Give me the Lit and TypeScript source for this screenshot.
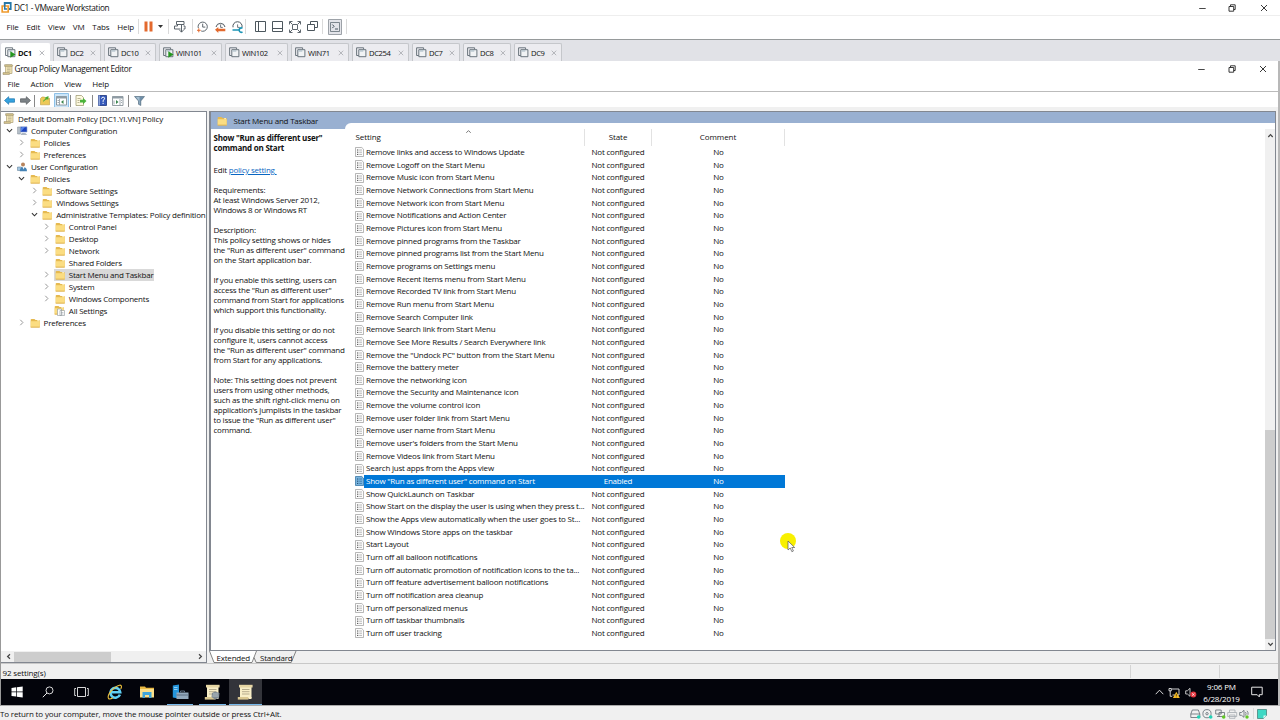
import { css, CSSResultGroup, html, LitElement, nothing, svg, SVGTemplateResult, TemplateResult } from "lit";
import { property, customElement } from "lit/decorators.js";
import { classMap } from "lit/directives/class-map.js";
import { styleMap } from "lit/directives/style-map.js";

interface Glyph {
    w: number;
    h: number;
    body: SVGTemplateResult;
}

const scroll = svg`<path d="M3.5 1H10v8.5H3.5z" fill="#f3e6b5" stroke="#a2956e" stroke-width=".6"/><path d="M2.6.7h7.6q1 .7 0 1.700H2.6zM1 8.6h6.4q1 1 0 1.9H1z" fill="#d8c58c" stroke="#8f8465" stroke-width=".5"/><path d="M5 4h3.5M5 5.6h3.5M5 7.2h3.5" stroke="#a99f83" stroke-width=".6"/>`;
const bigScroll = svg`<path d="M3 2h11.5v12H3z" fill="#f8eec7"/><path d="M2 .8h13.6v2.7H2z" fill="#e6d6a4"/><path d="M.8 13h10.7v2.6H.8z" fill="#d9c68f"/><path d="M11.5 13h3v2h-3z" fill="#fff2c7"/><path d="M5 5.5h7.5M5 7.7h7.5M5 10h7.5" stroke="#a49a7d" stroke-width=".8"/>`;
const folder = svg`<path d="M.7 1.8Q.7 1 1.5 1h3l1 1H9q.7 0 .7.8v6.5H.7z" fill="#e5b950"/><path d="M.7 3.2h9v6.1H.7z" fill="#fbdd82"/><path d="M.7 8.7h9v.8h-9z" fill="#d9ab49"/><path d="M7.3 2.1h1.6v1.2H7.3z" fill="#fff3bf"/>`;
const vm = svg`<path d="M2.8 8.5H.6V.8h7v1.6" fill="none" stroke="#5c6870" stroke-width=".9"/><path d="M2.8 2.7h7.1v7H2.8z" fill="#f1f3f5" stroke="#5c6870" stroke-width=".9"/><path d="M3.3 3.1h4v1.6h-4z" fill="#b9c6cf"/>`;

const glyphs: { [name: string]: Glyph } = {
    vmware: { w: 11, h: 11, body: svg`<path d="M3.7 4V1h6v6H7.4" fill="none" stroke="#2778a8" stroke-width="1.8"/><path d="M1.2 4h6v6h-6z" fill="none" stroke="#ef9a2c" stroke-width="1.7"/><path d="M3.7 3v4H6" fill="none" stroke="#2778a8" stroke-width="1.5"/>` },
    scroll: { w: 12, h: 11, body: scroll },
    folder: { w: 10, h: 10, body: folder },
    vm: { w: 11, h: 11, body: vm },
    vmOn: { w: 11, h: 11, body: svg`${vm}<path d="M5.3 4.2v6.6l5.3-3.300z" fill="#25961f"/>` },
    pause: { w: 9, h: 11, body: svg`<path d="M.5.5h3v10h-3zM5.5.5h3v10h-3z" fill="#e3692d"/>` },
    caret: { w: 5, h: 3, body: svg`<path d="M0 0h5L2.5 3z" fill="#333"/>` },
    send: { w: 12, h: 12, body: svg`<path d="M2.5.5h7.500v3H2.5zM3.5 3.5v1.500H.5v3h6M9.500 5h1.500v3h-1.500" fill="none" stroke="#4c565d" stroke-width=".9"/><path d="M7.500 4v7M5.300 8.800 7.500 11.200 9.700 8.800" fill="none" stroke="#4c565d" stroke-width=".9"/>` },
    snap: { w: 11, h: 12, body: svg`<circle cx="5.7" cy="5.7" r="4.6" fill="none" stroke="#4c565d" stroke-width=".9"/><path d="M5.7 2.7v3.4h2.6" fill="none" stroke="#4c565d" stroke-width=".9"/><path d="M0 7h4.2v5H0z" fill="#fff"/><path d="M1.8 7.3v4M0 9.3h3.7" stroke="#e3692d"/>` },
    revert: { w: 11, h: 12, body: svg`<path d="M1 6a4.6 4.6 0 0 1 9 0" fill="none" stroke="#4c565d"/><path d="M5.6 3.4v3h2.2" fill="none" stroke="#4c565d" stroke-width=".8"/><path d="M0 8.8 3.3 6v1.8h7v2.4h-7V12z" fill="#e3692d"/>` },
    manage: { w: 11, h: 12, body: svg`<path d="M1 6.3a4.6 4.6 0 1 1 9 0" fill="none" stroke="#4c565d"/><path d="M5.6 3.4v3h2.2" fill="none" stroke="#4c565d" stroke-width=".8"/><path d="M.5 9h6.8M10.5 7.2a2.2 2.2 0 1 0 0 3.7" fill="none" stroke="#1b94b5" stroke-width="1.7"/>` },
    side: { w: 11, h: 11, body: svg`<path d="M.5.5h10v10H.5zM3.5.5v10" fill="none" stroke="#4c565d"/>` },
    lower: { w: 11, h: 11, body: svg`<path d="M.5.5h10v10H.5zM.5 7.5h10" fill="none" stroke="#4c565d"/>` },
    full: { w: 12, h: 12, body: svg`<path d="M.5 3.5v-3h3M8.5.5h3v3M11.5 8.5v3h-3M3.5 11.5h-3v-3M3.5 3.5h5v5h-5zM1 1l2 2M11 1 9 3M11 11 9 9M1 11l2-2" fill="none" stroke="#4c565d" stroke-width=".9"/>` },
    unity: { w: 11, h: 11, body: svg`<path d="M3.5 3.5V.5h7v6H7.5M.5 3.5h7v6H.5z" fill="none" stroke="#4c565d"/>` },
    console: { w: 14, h: 16, body: svg`<path d="M.5.5h13v15H.5z" fill="#e3e4e9" stroke="#9da2a8"/><path d="M2.5 3.5h9v9h-9z" fill="none" stroke="#626d75" stroke-width=".8"/><path d="m4.3 5.5 1.8 1.8-1.8 1.8M7 10h3" fill="none" stroke="#34444f" stroke-width=".9"/>` },
    min: { w: 8, h: 8, body: svg`<path d="M.2 4.5h6.500" stroke="#333" stroke-width=".9"/>` },
    restore: { w: 8, h: 8, body: svg`<path d="M1.500 2.3V.8h4.700v4.7H4.700M0 2.500h4.700v4.7H0z" fill="none" stroke="#222" stroke-width=".9"/>` },
    close: { w: 8, h: 8, body: svg`<path d="m1 1 6 6M7 1 1 7" stroke="#222" stroke-width=".9"/>` },
    tabClose: { w: 6, h: 6, body: svg`<path d="m.7.7 4.5 4.5M5.2.7.7 5.2" stroke="#adafb3" stroke-width=".9"/>` },
    back: { w: 11, h: 9, body: svg`<path d="M.5 4.5 4.7.7v2.1h5.8v3.4H4.7v2.1z" fill="#35a2df" stroke="#1872ad" stroke-width=".7"/>` },
    forward: { w: 11, h: 9, body: svg`<path d="M10.5 4.5 6.3.7v2.1H.5v3.4h5.8v2.1z" fill="#7c8286" stroke="#54595c" stroke-width=".7"/>` },
    up: { w: 10, h: 11, body: svg`<path d="M.5 3.5 2 2h2.5l1 1.2h4v6.6h-9z" fill="#edc957" stroke="#c19b3d" stroke-width=".6"/><path d="M3 7Q3 4.5 5.5 4L5 2.5 8.5 1 8.3 4.8 7 4.3Q5 5 3 7z" fill="#4cad35"/>` },
    paneOn: { w: 15, h: 15, body: svg`<path d="M.5.5h14v14H.5z" fill="#cce5f8" stroke="#8dc1e8"/><path d="M2.5 3.5h10v8.5h-10z" fill="#fff" stroke="#7a858d" stroke-width=".8"/><path d="M2.5 3.5h10v2h-10z" fill="#8f9ca5"/><path d="M5.5 6v6M3.5 7.5H5M3.5 9.5H5" stroke="#8d989f" stroke-width=".8"/><path d="m7 9 2.5-2v4z" fill="#38834b"/>` },
    pane: { w: 12, h: 10, body: svg`<path d="M.5.5h10.5v9H.5z" fill="#fff" stroke="#7a858d" stroke-width=".8"/><path d="M.5.5h10.5v2H.5z" fill="#8f9ca5"/><path d="M8 3v6M9 4.5h1M9 6.5h1M2 4.5v4" stroke="#8d989f" stroke-width=".8"/><path d="M6.5 6 4 4v4z" fill="#38834b"/>` },
    exp: { w: 12, h: 11, body: svg`<path d="M1 .5h5.5l2 2v8H1z" fill="#fdf9df" stroke="#979268" stroke-width=".7"/><path d="M2.5 3.5h3M2.5 5.5h2M2.5 7.5h2" stroke="#9d9878" stroke-width=".7"/><path d="M5 4.7h3V3l3.5 3.1L8 9.2V7.5H5z" fill="#4bb33b"/>` },
    help: { w: 9, h: 11, body: svg`<path d="M.5.5h8v10h-8z" fill="#3559bb" stroke="#1c347e" stroke-width=".8"/><path d="M.5.5H2v10H.5z" fill="#8da4da"/><path d="M3.5 3.7q.2-1.6 1.7-1.5 1.6.1 1.4 1.6Q6.3 4.8 5.1 5.4v1.5M5.1 7.8v1.2" fill="none" stroke="#fff"/>` },
    filter: { w: 11, h: 10, body: svg`<path d="M.5.5h10L6.8 5v4.5L4.5 8.3V5z" fill="#6f8fa9" stroke="#4c6577" stroke-width=".6"/><path d="M2 1h3.5v7.5L5 8V5z" fill="#a5bfd2"/>` },
    open: { w: 7, h: 7, body: svg`<path d="m.9 2.2 2.6 2.6 2.6-2.6" fill="none" stroke="#333" stroke-width="1.1"/>` },
    shut: { w: 7, h: 7, body: svg`<path d="M2.3.8 4.9 3.5 2.3 6.2" fill="none" stroke="#8c8c8c" stroke-width=".9"/>` },
    computer: { w: 11, h: 10, body: svg`<path d="M.6 1h2.7v7H.6z" fill="#b9c2cc" stroke="#77828d" stroke-width=".5"/><path d="M3.5.8h6.5v5.2H3.5z" fill="#1d43bf" stroke="#8ba0c9" stroke-width=".6"/><path d="M5 .9h3L4 5.6V2z" fill="#5684e8"/><path d="M4.8 7h3.5l2 2H3.5z" fill="#aeb8c4"/>` },
    user: { w: 11, h: 10, body: svg`<path d="M.5 5h4v3.5h-4z" fill="#a5c6e0" stroke="#54758f" stroke-width=".5"/><circle cx="6" cy="2.6" r="2" fill="#b7835b"/><path d="M2.8 9.3q0-4 3.2-4.2 3.8 0 4 4.2z" fill="#4683b5"/><path d="m5.5 5 1.2 2.5L7.5 5z" fill="#fff"/>` },
    all: { w: 11, h: 11, body: svg`${folder}<path d="M3.5 4h4v6.5h-4zM6 5.5h4.5v5H6z" fill="#fff" stroke="#8e979c" stroke-width=".6"/><path d="M7 7.5h2.5M7 9h2.5" stroke="#8e979c" stroke-width=".5"/>` },
    policy: { w: 9, h: 10, body: svg`<path d="M.5.5h6.3l1.7 1.7v7.3h-8z" fill="#fcfcfc" stroke="#9a9a9a" stroke-width=".7"/><path d="M2 3h1.3M2 5.2h1.3M2 7.4h1.3" stroke="#333" stroke-width=".9"/><path d="M4.2 3H7M4.2 5.2H7M4.2 7.4H7" stroke="#999" stroke-width=".7"/>` },
    policySel: { w: 9, h: 10, body: svg`<path d="M.5.5h6.3l1.7 1.7v7.3h-8z" fill="#79b4df" stroke="#2a6c9d" stroke-width=".7"/><path d="M2 3h1.3M2 5.2h1.3M2 7.4h1.3" stroke="#123c5d" stroke-width=".9"/><path d="M4.2 3H7M4.2 5.2H7M4.2 7.4H7" stroke="#2a6c9d" stroke-width=".7"/>` },
    sort: { w: 7, h: 5, body: svg`<path d="m1.3 3.8 2.2-2.2 2.2 2.2" fill="none" stroke="#666" stroke-width=".9"/>` },
    arrowUp: { w: 7, h: 5, body: svg`<path d="m1.3 4 2.2-2.4L5.7 4" fill="none" stroke="#444" stroke-width="1.2"/>` },
    arrowDown: { w: 7, h: 5, body: svg`<path d="m1.3 1 2.2 2.4L5.7 1" fill="none" stroke="#444" stroke-width="1.2"/>` },
    arrowLeft: { w: 5, h: 7, body: svg`<path d="M4 1.3 1.6 3.5 4 5.7" fill="none" stroke="#444" stroke-width="1.2"/>` },
    arrowRight: { w: 5, h: 7, body: svg`<path d="m1 1.3 2.4 2.2L1 5.7" fill="none" stroke="#444" stroke-width="1.2"/>` },
    windows: { w: 12, h: 12, body: svg`<path d="m.5 2 4.7-.7v4.3H.5zM5.9 1.2 11.7.4v5.2H5.9zM.5 6.3h4.7v4.3L.5 9.9zM5.9 6.3h5.8v5.3l-5.8-.8z" fill="#fff"/>` },
    search: { w: 12, h: 12, body: svg`<circle cx="7.5" cy="4.4" r="3.5" fill="none" stroke="#eee" stroke-width=".9"/><path d="M5 7 .8 11.2" stroke="#eee"/>` },
    views: { w: 15, h: 12, body: svg`<path d="M3.5 1.5h8v9h-8zM2 2.5H.7v7H2M13 2.5h1.3v7H13" fill="none" stroke="#eee" stroke-width=".9"/>` },
    ie: { w: 16, h: 16, body: svg`<path d="M12.9 10.6A4.9 4.9 0 1 1 13.200 8.200H4.5" fill="none" stroke="#5fd0f5" stroke-width="2.6"/><path d="M1.5 14.5C-.5 11 7 2.3 12.5 1.2c2.5-.4 2.3 2 1.2 3.8M1.5 14.5c1 .9 3 .2 4.5-.7" fill="none" stroke="#f0c43e" stroke-width="1.1"/>` },
    explorer: { w: 16, h: 14, body: svg`<path d="M1 1.5h5l1 1.2h8V12H1z" fill="#e8b843"/><path d="M1 4h14v8.5H1z" fill="#fbe08a"/><path d="M3.5 7h9v6h-2.5v-3H6v3H3.5z" fill="#3fa5d9"/>` },
    server: { w: 17, h: 16, body: svg`<path d="M.8 1.5 7 .5v14l-6.2-1z" fill="#2494da"/><path d="M2 3.5h3.5M2 5.5h3.5" stroke="#a7dcfb" stroke-width=".8"/><path d="M4.5 8.5h12v6.5h-12z" fill="#93a9bd"/><path d="M8.5 8.3V7h4v1.3M4.5 11h12" fill="none" stroke="#5e7184"/>` },
    gpm: { w: 17, h: 16, body: svg`${bigScroll}<path d="m8 9 3-1.5L15.5 9l-.5 5-4 1.5L7.5 13z" fill="#7f8b93"/><path d="M9 10h5M8.5 12h6" stroke="#c2ccd2" stroke-width=".8"/>` },
    gpe: { w: 17, h: 16, body: bigScroll },
    chevron: { w: 9, h: 6, body: svg`<path d="m.7 5.2 3.8-4 3.8 4" fill="none" stroke="#eee" stroke-width=".9"/>` },
    net: { w: 12, h: 11, body: svg`<path d="M3.5 2h7.5v6H4.5M6 10h3M1 1.5h2.3v2.3H1zM2.2 4v5.3h2" fill="none" stroke="#e5e5e5" stroke-width=".9"/><path d="M8.3 4.8 11.8 11H4.9z" fill="#f6bb25"/><path d="M8.3 7v2M8.3 9.6v.7" stroke="#493500" stroke-width=".8"/>` },
    mute: { w: 12, h: 11, body: svg`<path d="M.7 3.8h1.7L5 1.3v8L2.4 7H.7z" fill="none" stroke="#eee" stroke-width=".8"/><circle cx="8.3" cy="7.5" r="3" fill="#e3333d"/><path d="m7.1 6.3 2.4 2.4M9.5 6.3 7.1 8.7" stroke="#fff" stroke-width=".8"/>` },
    note: { w: 12, h: 12, body: svg`<path d="M.7 1.2h10.5v7.5H8.3v2.2L6.2 8.7H.7z" fill="none" stroke="#e8e8e8"/>` },
    disk: { w: 11, h: 10, body: svg`<path d="M2.3 1h6l1.5 4v3.5h-9V5zM.8 5h9" fill="none" stroke="#5f6a71" stroke-width=".8"/><circle cx="8.7" cy="8" r="1.8" fill="#20d3b7"/>` },
    cd: { w: 11, h: 10, body: svg`<circle cx="5" cy="4.7" r="4.1" fill="none" stroke="#5f6a71" stroke-width=".8"/><circle cx="5" cy="4.7" r="1.2" fill="none" stroke="#5f6a71" stroke-width=".8"/><circle cx="8.7" cy="8" r="1.8" fill="#20d3b7"/>` },
    lan: { w: 11, h: 10, body: svg`<path d="M.7 1h5.5v4H.7zM4 3.5h5.5v4H4zM2 7.5h3" fill="#f0f0f0" stroke="#5f6a71" stroke-width=".8"/><circle cx="8.7" cy="8" r="1.8" fill="#60c627"/>` },
    printer: { w: 11, h: 10, body: svg`<path d="M2.5 3.5V1h5.5v2.5M.7 3.5h9v4h-9zM2.5 6h5.5v3.3H2.5z" fill="none" stroke="#a5abb0" stroke-width=".8"/>` },
    sound: { w: 11, h: 10, body: svg`<path d="M.7 3.5h1.8L5 1.3v7L2.5 6.3H.7zM6.5 3q1.2 1.7 0 3.5M8 1.8q1.5 1.7 1 4" fill="none" stroke="#5f6a71" stroke-width=".8"/><circle cx="8" cy="8" r="1.7" fill="#60c627"/>` },
    sticky: { w: 10, h: 10, body: svg`<path d="M.5.5h9v6l-3 3h-6z" fill="#3ed8c4" stroke="#3b7770" stroke-width=".7"/><path d="M6.5 9.5v-3h3z" fill="#dffaf5"/>` },
    pointer: { w: 9, h: 13, body: svg`<path d="M1 1v9l2.2-2 1.7 3.7 1.5-.7-1.6-3.5h2.9z" fill="#fff" stroke="#555" stroke-width=".7"/>` },
    tabs: { w: 90, h: 13, body: svg`<path d="M0 0h48l-4.5 11.5H5z" fill="#fff"/><path d="M.5 0 5 11.5h38L47.5 0M45 6.5l2.2 5h35L87 0" fill="none" stroke="#666" stroke-width=".8"/>` },
};

const vmTabs: [string, number, boolean][] = [
    ["DC1", 49, true], ["DC2", 48, false], ["DC10", 52, false], ["WIN101", 63, true], ["WIN102", 63, false],
    ["WIN71", 58, false], ["DC254", 57, false], ["DC7", 48, false], ["DC8", 48, false], ["DC9", 48, false],
];

// label, depth, twisty, icon
const tree: [string, number, string, string][] = [
    ["Computer Configuration", 0, "open", "computer"],
    ["Policies", 1, "shut", "folder"],
    ["Preferences", 1, "shut", "folder"],
    ["User Configuration", 0, "open", "user"],
    ["Policies", 1, "open", "folder"],
    ["Software Settings", 2, "shut", "folder"],
    ["Windows Settings", 2, "shut", "folder"],
    ["Administrative Templates: Policy definition", 2, "open", "folder"],
    ["Control Panel", 3, "shut", "folder"],
    ["Desktop", 3, "shut", "folder"],
    ["Network", 3, "shut", "folder"],
    ["Shared Folders", 3, "", "folder"],
    ["Start Menu and Taskbar", 3, "shut", "folder"],
    ["System", 3, "shut", "folder"],
    ["Windows Components", 3, "shut", "folder"],
    ["All Settings", 3, "", "all"],
    ["Preferences", 1, "shut", "folder"],
];

const selected = 'Show "Run as different user" command on Start';

const settings = [
    "Remove links and access to Windows Update",
    "Remove Logoff on the Start Menu",
    "Remove Music icon from Start Menu",
    "Remove Network Connections from Start Menu",
    "Remove Network icon from Start Menu",
    "Remove Notifications and Action Center",
    "Remove Pictures icon from Start Menu",
    "Remove pinned programs from the Taskbar",
    "Remove pinned programs list from the Start Menu",
    "Remove programs on Settings menu",
    "Remove Recent Items menu from Start Menu",
    "Remove Recorded TV link from Start Menu",
    "Remove Run menu from Start Menu",
    "Remove Search Computer link",
    "Remove Search link from Start Menu",
    "Remove See More Results / Search Everywhere link",
    'Remove the "Undock PC" button from the Start Menu',
    "Remove the battery meter",
    "Remove the networking icon",
    "Remove the Security and Maintenance icon",
    "Remove the volume control icon",
    "Remove user folder link from Start Menu",
    "Remove user name from Start Menu",
    "Remove user's folders from the Start Menu",
    "Remove Videos link from Start Menu",
    "Search just apps from the Apps view",
    selected,
    "Show QuickLaunch on Taskbar",
    "Show Start on the display the user is using when they press t...",
    "Show the Apps view automatically when the user goes to St...",
    "Show Windows Store apps on the taskbar",
    "Start Layout",
    "Turn off all balloon notifications",
    "Turn off automatic promotion of notification icons to the ta...",
    "Turn off feature advertisement balloon notifications",
    "Turn off notification area cleanup",
    "Turn off personalized menus",
    "Turn off taskbar thumbnails",
    "Turn off user tracking",
];

const description = [
    "Requirements:", "At least Windows Server 2012,", "Windows 8 or Windows RT", "",
    "Description:", "This policy setting shows or hides", 'the "Run as different user" command', "on the Start application bar.", "",
    "If you enable this setting, users can", 'access the "Run as different user"', "command from Start for applications", "which support this functionality.", "",
    "If you disable this setting or do not", "configure it, users cannot access", 'the "Run as different user" command', "from Start for any applications.", "",
    "Note: This setting does not prevent", "users from using other methods,", "such as the shift right-click menu on", "application's jumplists in the taskbar", 'to issue the "Run as different user"', "command.",
];

@customElement("app-icon")
export class AppIcon extends LitElement {
    @property() public name: string = "";

    protected render(): TemplateResult | typeof nothing {
        const g = glyphs[this.name];
        if (!g) return nothing;
        return html`<svg width=${g.w} height=${g.h} viewBox="0 0 ${g.w} ${g.h}">${g.body}</svg>`;
    }

    static get styles(): CSSResultGroup {
        return css`
            :host {
                display: flex;
                align-items: center;
                justify-content: center;
                flex: none;
            }
            svg {
                display: block;
                overflow: visible;
            }
        `;
    }
}

@customElement("app-root")
export class AppRoot extends LitElement {
    // A strip of icons; each cell is [icon, width], "|" draws a separator
    protected renderStrip(cells: [string, number][]): TemplateResult[] {
        return cells.map(
            ([name, w]) => html`<span class="cell" style=${styleMap({ width: `${w}px` })}>
                ${name === "|" ? html`<i class="sep"></i>` : html`<app-icon name=${name}></app-icon>`}
            </span>`
        );
    }

    protected renderWindowButtons(): TemplateResult {
        return html`<div class="winbtns">
            <app-icon name="min"></app-icon>
            <app-icon name="restore"></app-icon>
            <app-icon name="close"></app-icon>
        </div>`;
    }

    protected renderTree(): TemplateResult {
        return html`
            <div class="tree">
                <div class="nodes">
                    <div class="node root"><app-icon name="scroll"></app-icon><span class="name">Default Domain Policy [DC1.YI.VN] Policy</span></div>
                    ${tree.map(
                        ([label, depth, twisty, icon]) => html`
                            <div class="node" style=${styleMap({ paddingLeft: `${4 + depth * 12.6}px` })}>
                                <span class="twisty"><app-icon name=${twisty}></app-icon></span>
                                <span class=${classMap({ item: true, current: label === "Start Menu and Taskbar" })}>
                                    <span class="pic"><app-icon name=${icon}></app-icon></span><span class="name">${label}</span>
                                </span>
                            </div>
                        `
                    )}
                </div>
                <div class="hscroll">
                    <app-icon name="arrowLeft"></app-icon>
                    <div class="track"><div class="thumb"></div></div>
                    <app-icon name="arrowRight"></app-icon>
                </div>
            </div>
        `;
    }

    protected renderList(): TemplateResult {
        return html`
            <div class="list">
                <div class="row head">
                    <span class="c1">Setting<app-icon class="sort" name="sort"></app-icon></span>
                    <span class="c2">State</span>
                    <span class="c3">Comment</span>
                </div>
                ${settings.map((label) => {
                    const on = label === selected;
                    return html`
                        <div class=${classMap({ row: true, on })}>
                            <app-icon name=${on ? "policySel" : "policy"}></app-icon>
                            <span class="c1">${label}</span>
                            <span class="c2">${on ? "Enabled" : "Not configured"}</span>
                            <span class="c3">No</span>
                        </div>
                    `;
                })}
            </div>
        `;
    }

    protected renderTaskbar(): TemplateResult {
        return html`
            <div class="taskbar">
                ${["windows", "search", "views", "ie", "explorer", "server", "gpm", "gpe"].map(
                    (name, i) => html`<span class=${classMap({ task: true, running: i > 4, active: i === 7 })}>
                        <app-icon name=${name}></app-icon>
                    </span>`
                )}
                <div class="tray">
                    <app-icon name="chevron"></app-icon>
                    <app-icon name="net"></app-icon>
                    <app-icon name="mute"></app-icon>
                    <div class="clock"><span>9:06 PM</span><span>6/28/2019</span></div>
                    <app-icon name="note"></app-icon>
                </div>
            </div>
        `;
    }

    protected render(): TemplateResult {
        return html`
            <div class="title host">
                <app-icon name="vmware"></app-icon><span>DC1 - VMware Workstation</span>
                ${this.renderWindowButtons()}
            </div>
            <div class="hostbar">
                <nav class="menu">${["File", "Edit", "View", "VM", "Tabs", "Help"].map((m) => html`<span>${m}</span>`)}</nav>
                ${this.renderStrip([["|", 6], ["pause", 15], ["caret", 9], ["|", 6], ["send", 18], ["|", 6], ["snap", 15],
                    ["revert", 20], ["manage", 15], ["|", 1], ["", 6], ["side", 17], ["lower", 17], ["full", 18], ["unity", 17],
                    ["|", 3], ["", 4], ["console", 14], ["|", 8]])}
            </div>
            <div class="vmtabs">
                ${vmTabs.map(
                    ([name, w, on], i) => html`<div class=${classMap({ vmtab: true, front: i === 0 })} style=${styleMap({ width: `${w}px` })}>
                        <app-icon name=${on ? "vmOn" : "vm"}></app-icon>
                        <span class="grow">${name}</span>
                        <app-icon name="tabClose"></app-icon>
                    </div>`
                )}
            </div>
            <div class="guest">
                <div class="title inner">
                    <app-icon name="scroll"></app-icon><span>Group Policy Management Editor</span>
                    ${this.renderWindowButtons()}
                </div>
                <nav class="menu innermenu">${["File", "Action", "View", "Help"].map((m) => html`<span>${m}</span>`)}</nav>
                <div class="tools">
                    ${this.renderStrip([["back", 17], ["forward", 14], ["|", 5], ["up", 16], ["paneOn", 16], ["|", 3], ["exp", 18],
                        ["|", 4], ["help", 16], ["pane", 15], ["|", 6], ["filter", 16]])}
                </div>
                <div class="panes">
                    ${this.renderTree()}
                    <div class="right">
                        <div class="sheet">
                            <div class="banner">
                                <div class="crumb"><app-icon name="folder"></app-icon><span>Start Menu and Taskbar</span></div>
                                <div class="curve"></div>
                            </div>
                            <div class="body">
                                <div class="info">
                                    <b>Show "Run as different user"</b><b>command on Start</b>
                                    <p class="edit">Edit <a>policy setting&nbsp;</a></p>
                                    ${description.map((line) => html`<p>${line}</p>`)}
                                </div>
                                ${this.renderList()}
                                <div class="vscroll">
                                    <app-icon name="arrowUp"></app-icon>
                                    <div class="vtrack"><div class="vthumb"></div></div>
                                    <app-icon name="arrowDown"></app-icon>
                                </div>
                            </div>
                        </div>
                        <div class="views">
                            <app-icon class="viewshape" name="tabs"></app-icon>
                            <span class="v1">Extended</span><span>Standard</span>
                        </div>
                    </div>
                </div>
                <div class="status"><span class="count">92 setting(s)</span><i></i><i></i></div>
                ${this.renderTaskbar()}
            </div>
            <div class="hoststatus">
                <span class="grow hint">To return to your computer, move the mouse pointer outside or press Ctrl+Alt.</span>
                ${this.renderStrip([["disk", 12], ["cd", 13], ["lan", 12], ["printer", 12], ["sound", 13], ["|", 5], ["sticky", 12]])}
            </div>
            <div class="spot"><app-icon name="pointer"></app-icon></div>
        `;
    }

    static get styles(): CSSResultGroup {
        return css`
            :host {
                display: flex;
                flex-direction: column;
                position: relative;
                box-sizing: border-box;
                width: 1280px;
                height: 720px;
                overflow: hidden;
                background: #fff;
                color: #111;
                font: 8px/12px "Open Sans", "Noto Sans", sans-serif;
                letter-spacing: -0.21px;
                white-space: nowrap;
            }
            * {
                box-sizing: border-box;
            }
            .grow {
                flex: 1;
            }
            .title {
                display: flex;
                align-items: center;
                flex: none;
            }
            .host {
                height: 16px;
                padding-left: 1px;
                gap: 2px;
                font-size: 8.3px;
                letter-spacing: -0.35px;
                border-bottom: 1px solid #eee;
            }
            .winbtns {
                display: flex;
                gap: 22.5px;
                margin-left: auto;
                padding-right: 12.5px;
            }
            .hostbar {
                display: flex;
                align-items: center;
                height: 24px;
                padding-bottom: 2px;
                border-bottom: 1px solid #969a9b;
                flex: none;
            }
            .menu {
                display: flex;
            }
            .hostbar .menu {
                width: 135px;
                padding-left: 6.5px;
                gap: 7.8px;
                letter-spacing: -0.12px;
                flex: none;
            }
            .cell {
                display: flex;
                align-items: center;
                justify-content: center;
                flex: none;
            }
            .sep {
                width: 1px;
                height: 15px;
                background: #dadada;
            }
            .vmtabs {
                display: flex;
                align-items: flex-end;
                gap: 3px;
                height: 21px;
                padding-left: 1px;
                background: #e1e2e7;
                flex: none;
            }
            .vmtab {
                display: flex;
                align-items: center;
                gap: 2px;
                height: 18px;
                padding: 0 4px 0 3px;
                border: 1px solid #c5c7cb;
                border-bottom: none;
                border-radius: 2px 2px 0 0;
                background: #ececf0;
                font-size: 7.6px;
                letter-spacing: -0.36px;
                flex: none;
            }
            .front {
                background: #fff;
                border-color: #fff;
                font-weight: bold;
            }
            .guest {
                display: flex;
                flex-direction: column;
                height: 645px;
                border-left: 1px solid #999;
                border-right: 2px solid #b8b8b8;
                flex: none;
            }
            .inner {
                height: 16px;
                padding-left: 1px;
                gap: 0.5px;
                font-size: 8.3px;
                letter-spacing: -0.36px;
            }
            .inner .winbtns {
                padding-right: 11px;
            }
            .innermenu {
                height: 15px;
                padding-left: 6.5px;
                gap: 10.8px;
                line-height: 14px;
                letter-spacing: -0.1px;
                border-bottom: 1px solid #bbb;
                flex: none;
            }
            .tools {
                display: flex;
                align-items: center;
                height: 15px;
                padding-top: 2px;
                flex: none;
            }
            .tools .sep {
                height: 12px;
                background: #888;
            }
            .panes {
                display: flex;
                height: 557px;
                padding: 4px 2px 0 0;
                background: #f0f0f0;
                border-bottom: 1px solid #c8c8c8;
                flex: none;
            }
            .tree {
                display: flex;
                flex-direction: column;
                width: 206px;
                height: 552px;
                border: 1px solid #828790;
                border-left: none;
                background: #fff;
                overflow: hidden;
            }
            .nodes {
                flex: 1;
                padding-top: 0.5px;
                overflow: hidden;
            }
            .node {
                display: flex;
                align-items: center;
                height: 12px;
            }
            .root {
                padding-left: 2px;
                gap: 3px;
                letter-spacing: -0.13px;
            }
            .twisty {
                display: flex;
                justify-content: center;
                width: 8px;
                margin-right: 3px;
                flex: none;
            }
            .item {
                display: flex;
                align-items: center;
                height: 12px;
                padding-right: 1px;
            }
            .current {
                background: #d9d9d9;
            }
            .pic {
                width: 12px;
                margin-right: 3px;
                flex: none;
            }
            .hscroll {
                display: flex;
                align-items: center;
                height: 11px;
                padding: 0 3px 0 4.5px;
                background: #f0f0f0;
            }
            .track {
                flex: 1;
            }
            .thumb {
                width: 97px;
                height: 10px;
                margin-left: 3px;
                background: #cdcdcd;
            }
            .right {
                display: flex;
                flex-direction: column;
                flex: 1;
                margin-left: 2px;
            }
            .sheet {
                display: flex;
                flex-direction: column;
                height: 541px;
                border: 1px solid #828790;
                border-left-width: 2px;
                background: #fff;
            }
            .banner {
                display: flex;
                height: 17px;
                background: #99b0d1;
                flex: none;
            }
            .crumb {
                display: flex;
                align-items: center;
                gap: 6.5px;
                width: 134px;
                padding: 1px 0 0 6px;
            }
            .curve {
                flex: 1;
                height: 6px;
                margin-top: 11px;
                background: #fff;
                border-top-left-radius: 6px;
            }
            .body {
                display: flex;
                flex: 1;
                min-height: 0;
            }
            .info {
                width: 134px;
                padding: 4px 0 0 2.5px;
                line-height: 10px;
                flex: none;
            }
            .info b {
                display: block;
                letter-spacing: -0.22px;
            }
            .info p {
                height: 10px;
                margin: 0;
            }
            .info .edit {
                margin: 12px 0 10px;
            }
            .edit a {
                color: #0a66c2;
                text-decoration: underline;
            }
            .list {
                width: 441px;
                padding-left: 10px;
                flex: none;
            }
            .row {
                display: flex;
                align-items: center;
                height: 12.667px;
            }
            .row span {
                align-self: stretch;
                line-height: 12.667px;
                flex: none;
            }
            .row .c1 {
                width: 220px;
                padding-left: 2px;
            }
            .row .c2,
            .row .c3 {
                text-align: center;
            }
            .row .c2 {
                width: 68px;
            }
            .row .c3 {
                width: 133px;
            }
            .on .c1,
            .on .c2,
            .on .c3 {
                background: #0078d7;
                color: #fff;
            }
            .head {
                height: 17px;
                align-items: stretch;
            }
            .head .c1 {
                position: relative;
                width: 230px;
                padding-left: 0.5px;
            }
            .head .c1,
            .head .c2,
            .head .c3 {
                height: 17px;
                line-height: 16.5px;
                letter-spacing: -0.08px;
                border-right: 1px solid #e2e2e2;
            }
            .head .c2 {
                width: 67px;
            }
            .sort {
                position: absolute;
                top: 0;
                left: 110px;
            }
            .vscroll {
                display: flex;
                flex-direction: column;
                align-items: center;
                width: 10px;
                margin-left: auto;
                padding: 4px 0 3px;
                background: #f0f0f0;
            }
            .vtrack {
                display: flex;
                align-items: flex-end;
                flex: 1;
            }
            .vthumb {
                width: 10px;
                height: 209px;
                margin-bottom: 3px;
                background: #cdcdcd;
            }
            .views {
                display: flex;
                align-items: center;
                position: relative;
                height: 12px;
                padding: 1px 0 0 7.5px;
                gap: 10px;
            }
            .viewshape {
                position: absolute;
                left: 0;
                top: 0;
            }
            .views span {
                position: relative;
            }
            .status {
                display: flex;
                height: 15px;
                background: #f0f0f0;
                line-height: 17px;
                flex: none;
            }
            .status .count {
                width: 1129px;
                padding-left: 1.5px;
                letter-spacing: -0.15px;
                flex: none;
            }
            .status i {
                width: 89px;
                height: 13px;
                margin-top: 1px;
                border-left: 1px solid #d4d4d4;
                flex: none;
            }
            .taskbar {
                display: flex;
                height: 27px;
                background: #03040b;
                border-bottom: 1px solid #aaa;
                flex: none;
            }
            .task {
                display: flex;
                align-items: center;
                justify-content: center;
                width: 32.7px;
                border: solid transparent;
                border-width: 0 3px;
                flex: none;
            }
            .task:first-child {
                width: 32px;
            }
            .task:nth-child(2),
            .task:nth-child(3) {
                padding-right: 2px;
            }
            .running {
                box-shadow: inset 0 -1px #76b9ed;
            }
            .active {
                background: #33343a;
                border: none;
            }
            .tray {
                display: flex;
                align-items: center;
                margin-left: auto;
                padding-right: 15px;
                color: #fff;
            }
            .tray app-icon {
                margin-right: 4.5px;
            }
            .tray app-icon:last-child {
                margin: 0 0 0 9px;
            }
            .clock {
                display: flex;
                flex-direction: column;
                align-items: center;
                width: 41px;
                padding-top: 1px;
                letter-spacing: -0.16px;
            }
            .hoststatus {
                display: flex;
                align-items: center;
                height: 14px;
                padding: 1px 12px 0 0;
                background: #f0f0f0;
                flex: none;
            }
            .hint {
                letter-spacing: -0.145px;
            }
            .hoststatus .sep {
                height: 11px;
            }
            .spot {
                position: absolute;
                left: 780px;
                top: 533px;
                width: 16px;
                height: 16px;
                border-radius: 50%;
                background: #f8f000;
            }
            .spot app-icon {
                position: absolute;
                left: 7px;
                top: 7px;
            }
        `;
    }
}
